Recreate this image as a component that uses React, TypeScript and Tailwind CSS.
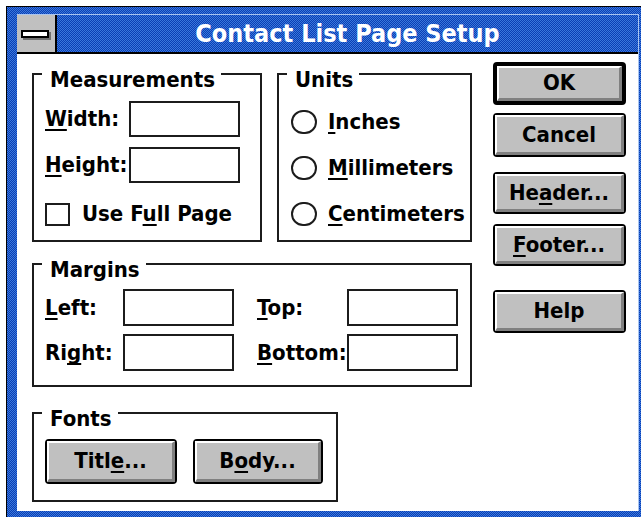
const dither =
  'bg-[repeating-conic-gradient(#0a3eb4_0%_25%,#3a78dc_0%_50%)] bg-[length:2px_2px]';

function U({ children }: { children: React.ReactNode }) {
  return (
    <span className="underline decoration-2 underline-offset-[3px] [text-decoration-skip-ink:none]">
      {children}
    </span>
  );
}

function Group({
  label,
  className,
  children,
}: {
  label: string;
  className: string;
  children: React.ReactNode;
}) {
  return (
    <div className={`relative border-2 border-[#1c1c1c] ${className}`}>
      <span className="absolute left-[8px] top-[-7px] bg-white pl-[8px] pr-[6px]">{label}</span>
      {children}
    </div>
  );
}

function Field({ h = 'h-[36px]' }: { h?: string }) {
  return <div className={`w-[111px] ${h} border-2 border-[#1c1c1c] bg-white`} />;
}

function Radio({ children }: { children: React.ReactNode }) {
  return (
    <div className="flex items-center">
      <div className="w-[26px] h-[24px] rounded-full border-2 border-[#1c1c1c]" />
      <span className="ml-[11px]">{children}</span>
    </div>
  );
}

function Button({
  children,
  className,
  isDefault = false,
}: {
  children: React.ReactNode;
  className: string;
  isDefault?: boolean;
}) {
  return (
    <div
      className={`${className} rounded-[4px] border-black ${
        isDefault ? 'border-[4px]' : 'border-2'
      } bg-[#c0c0c0]`}
    >
      <div className="flex h-full w-full items-center justify-center border-t-2 border-l-2 border-b-[3px] border-r-[3px] border-t-white border-l-white border-b-[#808080] border-r-[#808080]">
        {children}
      </div>
    </div>
  );
}

export default function App() {
  return (
    <div className="w-[641px] h-[517px] overflow-hidden bg-white pl-[6px] pt-[6px] font-['DejaVu_Sans_Condensed','DejaVu_Sans',sans-serif] font-stretch-condensed font-bold text-[22px] leading-[24px] text-black">
      <div className={`w-[640px] h-[516px] border-l border-t border-black pl-[10px] pt-[7px] ${dither}`}>
        <div className="w-[622px] border-r border-[#a8c4f0]">
          {/* Title bar */}
          <div className={`flex h-[40px] border-t border-[#a8c4f0] border-b-2 border-b-black ${dither}`}>
            <div className="flex w-[40px] items-center justify-center border-r-2 border-black bg-[#c0c0c0] pr-[2px]">
              <div className="w-[28px] h-[8px] border-2 border-black bg-white shadow-[2px_2px_0_#707070]" />
            </div>
            <div className="flex flex-1 items-center justify-center text-[25px] text-white">
              Contact List Page Setup
            </div>
          </div>

          {/* Client area */}
          <div className="flex h-[457px] bg-white pl-[15px] pt-[8px]">
            <div className="mt-[11px] flex w-[440px] flex-col">
              <div className="flex">
                <Group label="Measurements" className="w-[230px] h-[169px] pl-[11px] pt-[26px]">
                  <div className="flex items-center">
                    <span className="w-[84px]">
                      <U>W</U>idth:
                    </span>
                    <Field />
                  </div>
                  <div className="mt-[10px] flex items-center">
                    <span className="w-[84px]">
                      <U>H</U>eight:
                    </span>
                    <Field />
                  </div>
                  <div className="mt-[19px] flex items-center">
                    <div className="w-[25px] h-[23px] border-2 border-[#1c1c1c]" />
                    <span className="ml-[12px]">
                      Use F<U>u</U>ll Page
                    </span>
                  </div>
                </Group>
                <Group label="Units" className="ml-[15px] flex w-[195px] h-[169px] flex-col gap-[22px] pl-[12px] pt-[35px]">
                  <Radio>
                    <U>I</U>nches
                  </Radio>
                  <Radio>
                    <U>M</U>illimeters
                  </Radio>
                  <Radio>
                    <U>C</U>entimeters
                  </Radio>
                </Group>
              </div>

              <Group label="Margins" className="mt-[21px] w-[440px] h-[124px] pl-[11px] pt-[24px]">
                <div className="grid grid-cols-[78px_134px_90px_111px] items-center gap-y-[8px]">
                  <span>
                    <U>L</U>eft:
                  </span>
                  <Field h="h-[37px]" />
                  <span>
                    <U>T</U>op:
                  </span>
                  <Field h="h-[37px]" />
                  <span>
                    Ri<U>g</U>ht:
                  </span>
                  <Field h="h-[37px]" />
                  <span>
                    <U>B</U>ottom:
                  </span>
                  <Field h="h-[37px]" />
                </div>
              </Group>

              <Group label="Fonts" className="mt-[25px] flex w-[306px] h-[90px] pl-[11px] pt-[25px]">
                <Button className="w-[132px] h-[45px]">
                  <span>
                    Titl<U>e</U>...
                  </span>
                </Button>
                <Button className="ml-[16px] w-[130px] h-[45px]">
                  <span>
                    B<U>o</U>dy...
                  </span>
                </Button>
              </Group>
            </div>

            <div className="ml-[21px] flex w-[133px] flex-col">
              <Button isDefault className="w-[133px] h-[43px]">
                OK
              </Button>
              <Button className="mt-[8px] w-[133px] h-[44px]">Cancel</Button>
              <Button className="mt-[15px] w-[133px] h-[42px]">
                <span>
                  He<U>a</U>der...
                </span>
              </Button>
              <Button className="mt-[10px] w-[133px] h-[42px]">
                <span>
                  <U>F</U>ooter...
                </span>
              </Button>
              <Button className="mt-[24px] w-[133px] h-[43px]">Help</Button>
            </div>
          </div>
        </div>
      </div>
    </div>
  );
}
